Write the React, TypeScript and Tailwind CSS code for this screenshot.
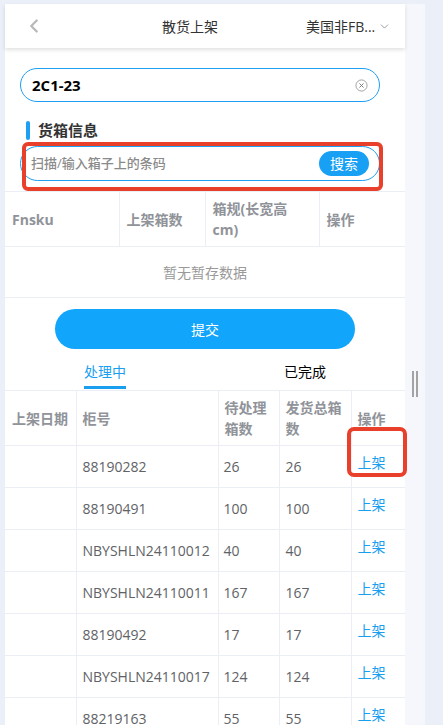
import { ChevronLeft, ChevronDown } from "lucide-react";

const font = { fontFamily: '"Open Sans", "Noto Sans CJK SC", sans-serif' };

const rows = [
  { no: "88190282", wait: "26", total: "26" },
  { no: "88190491", wait: "100", total: "100" },
  { no: "NBYSHLN24110012", wait: "40", total: "40" },
  { no: "NBYSHLN24110011", wait: "167", total: "167" },
  { no: "88190492", wait: "17", total: "17" },
  { no: "NBYSHLN24110017", wait: "124", total: "124" },
  { no: "88219163", wait: "55", total: "55" },
];

function ClearIcon() {
  return (
    <svg width="13" height="13" viewBox="0 0 14 14" fill="none">
      <circle cx="7" cy="7" r="6" stroke="#9a9a9a" strokeWidth="1" />
      <path d="M4.8 4.8l4.4 4.4M9.2 4.8l-4.4 4.4" stroke="#777" strokeWidth="1" />
    </svg>
  );
}

export default function App() {
  return (
    <div
      className="relative flex h-[725px] w-[443px] overflow-hidden bg-[#ebeff8] pl-[5px] pt-[4px]"
      style={font}
    >
      {/* main panel */}
      <div className="w-[400px] shrink-0 bg-white">
        <div className="relative z-10 flex h-[44px] items-center bg-white shadow-[0_2px_4px_rgba(0,0,0,0.12)]">
          <div className="flex w-[80px] items-center pl-[18px]">
            <ChevronLeft size={22} strokeWidth={2.5} className="text-[#b8b8b8]" />
          </div>
          <div className="flex-1 text-center text-[14px] text-[#333]">散货上架</div>
          <div className="flex w-[110px] items-center pl-[11px] text-[14px] text-[#333]">
            <span>美国非FB...</span>
            <ChevronDown size={13} strokeWidth={1.5} className="ml-[3px] text-[#888]" />
          </div>
        </div>

        <div className="ml-[15px] mt-[20px] flex h-[34px] w-[360px] items-center rounded-full border border-[#1e9ff2] pl-[11px] pr-[11px]">
          <span className="flex-1 text-[15px] font-bold text-black">2C1-23</span>
          <ClearIcon />
        </div>

        <div className="mt-[18px] flex h-[21px] items-center pl-[21px]">
          <div className="h-[19px] w-[4px] rounded-full bg-[#1e9ff2]" />
          <span className="ml-[8px] text-[15px] font-bold leading-[21px] text-[#333]">货箱信息</span>
        </div>

        <div className="ml-[15px] mt-[5px] flex h-[35px] w-[360px] items-center rounded-full border border-[#1e9ff2] pl-[10px] pr-[10px]">
          <span className="flex-1 text-[13px] font-medium text-[#8a8a8a]">扫描/输入箱子上的条码</span>
          <button className="h-[25px] w-[50px] rounded-full bg-[#18a0f4] text-[14px] text-white">搜索</button>
        </div>

        <table className="mt-[10px] w-full table-fixed border-collapse text-left">
          <thead>
            <tr className="h-[55px] border-y border-[#ebeef5] text-[14px] font-bold leading-[21px] text-[#909399]">
              <th className="w-[114px] border-r border-[#ebeef5] pl-[7px] font-bold">Fnsku</th>
              <th className="w-[86px] border-r border-[#ebeef5] pl-[7px] font-bold">上架箱数</th>
              <th className="w-[114px] border-r border-[#ebeef5] pl-[7px] font-bold">
                箱规(长宽高
                <br />
                cm)
              </th>
              <th className="pl-[7px] font-bold">操作</th>
            </tr>
          </thead>
          <tbody>
            <tr className="h-[51px] border-b border-[#ebeef5]">
              <td colSpan={4} className="text-center text-[14px] text-[#999]">暂无暂存数据</td>
            </tr>
          </tbody>
        </table>

        <div className="mt-[11px] flex justify-center">
          <button className="h-[40px] w-[300px] rounded-full bg-[#12a5fc] text-[14px] text-white">提交</button>
        </div>

        <div className="flex h-[41px]">
          <div className="flex flex-1 justify-center">
            <div className="flex flex-col justify-end">
              <span className="text-[14px] leading-[20px] text-[#1a9ff0]">处理中</span>
              <div className="mb-[1px] mt-[4px] h-[3px] bg-[#1a9ff0]" />
            </div>
          </div>
          <div className="flex flex-1 justify-center">
            <span className="mt-[13px] text-[14px] leading-[20px] text-black">已完成</span>
          </div>
        </div>

        <table className="w-full table-fixed border-collapse text-left">
          <thead>
            <tr className="h-[55px] border-y border-[#ebeef5] text-[14px] leading-[21px] text-[#909399]">
              <th className="w-[71px] border-r border-[#ebeef5] pl-[7px] font-bold">上架日期</th>
              <th className="w-[142px] border-r border-[#ebeef5] pl-[6px] font-bold">柜号</th>
              <th className="w-[61px] border-r border-[#ebeef5] pl-[6px] font-bold">待处理箱数</th>
              <th className="w-[72px] border-r border-[#ebeef5] pl-[6px] font-bold">发货总箱数</th>
              <th className="pl-[6px] font-bold">操作</th>
            </tr>
          </thead>
          <tbody>
            {rows.map((r) => (
              <tr key={r.no} className="h-[42px] border-b border-[#ebeef5] text-[14px] text-[#606266]">
                <td className="border-r border-[#ebeef5]" />
                <td className="whitespace-nowrap border-r border-[#ebeef5] pl-[6px]">{r.no}</td>
                <td className="border-r border-[#ebeef5] pl-[5px]">{r.wait}</td>
                <td className="border-r border-[#ebeef5] pl-[6px]">{r.total}</td>
                <td className="pb-[9px] pl-[6px] text-[#1a9ff0]">上架</td>
              </tr>
            ))}
          </tbody>
        </table>
      </div>

      {/* scroll strip */}
      <div className="flex w-[20px] shrink-0 justify-center bg-[#f5f7fc] pt-[367px]">
        <div className="flex h-[26px] gap-[2px]">
          <div className="w-[2px] bg-[#a3a3a3]" />
          <div className="w-[2px] bg-[#a3a3a3]" />
        </div>
      </div>

      {/* annotations */}
      <div className="absolute left-[22px] top-[142px] h-[49px] w-[361px] rounded-[6px] border-4 border-[#e8402b]" />
      <div className="absolute left-[347px] top-[427px] h-[50px] w-[60px] rounded-[7px] border-4 border-[#e8402b]" />
    </div>
  );
}
